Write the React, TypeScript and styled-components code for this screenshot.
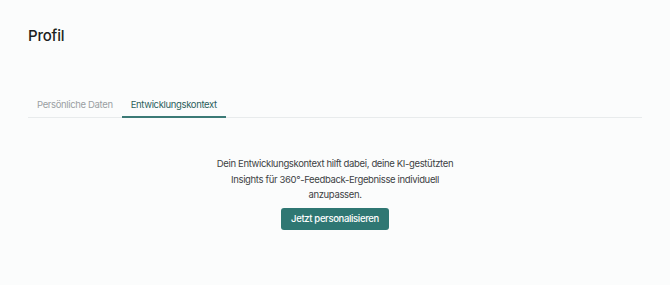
import React from "react";
import styled, { createGlobalStyle } from "styled-components";

const GlobalStyle = createGlobalStyle`
  html, body {
    margin: 0;
    padding: 0;
    background: #fbfcfc;
  }
  body {
    font-family: Inter, "Noto Sans", sans-serif;
  }
`;

const Page = styled.div`
  padding: 26px 28px 0 28px;
  box-sizing: border-box;
  width: 100%;
`;

const Title = styled.h1`
  margin: 0;
  font-size: 15px;
  font-weight: 500;
  letter-spacing: -0.2px;
  color: #1d1f21;
  line-height: 20px;
`;

const TabBar = styled.div`
  display: flex;
  margin-top: 49px;
  border-bottom: 1px solid #e8ebec;
`;

const Tab = styled.button<{ $active?: boolean }>`
  background: none;
  border: none;
  font-family: inherit;
  font-size: 9.5px;
  letter-spacing: -0.35px;
  line-height: 12px;
  padding: 4px 9px 5px 9px;
  margin-bottom: -1px;
  cursor: pointer;
  color: ${(p) => (p.$active ? "#2b5f5c" : "#9aa0a3")};
  border-bottom: 2px solid ${(p) => (p.$active ? "#3b7a76" : "transparent")};
`;

const Content = styled.div`
  display: flex;
  flex-direction: column;
  align-items: center;
  margin-top: 38px;
`;

const Text = styled.p`
  margin: 0;
  width: 245px;
  text-align: center;
  font-size: 9.5px;
  letter-spacing: -0.35px;
  line-height: 15.5px;
  color: #3d4244;
`;

const Button = styled.button`
  margin-top: 5px;
  background: #2f7773;
  color: #ffffff;
  border: none;
  border-radius: 3px;
  font-family: inherit;
  font-size: 9.5px;
  letter-spacing: -0.35px;
  font-weight: 500;
  height: 22px;
  padding: 0 10px;
  cursor: pointer;
`;

export default function App() {
  return (
    <>
      <GlobalStyle />
      <Page>
        <Title>Profil</Title>
        <TabBar>
          <Tab>Persönliche Daten</Tab>
          <Tab $active>Entwicklungskontext</Tab>
        </TabBar>
        <Content>
          <Text>
            Dein Entwicklungskontext hilft dabei, deine KI-gestützten Insights
            für 360°-Feedback-Ergebnisse individuell anzupassen.
          </Text>
          <Button>Jetzt personalisieren</Button>
        </Content>
      </Page>
    </>
  );
}
